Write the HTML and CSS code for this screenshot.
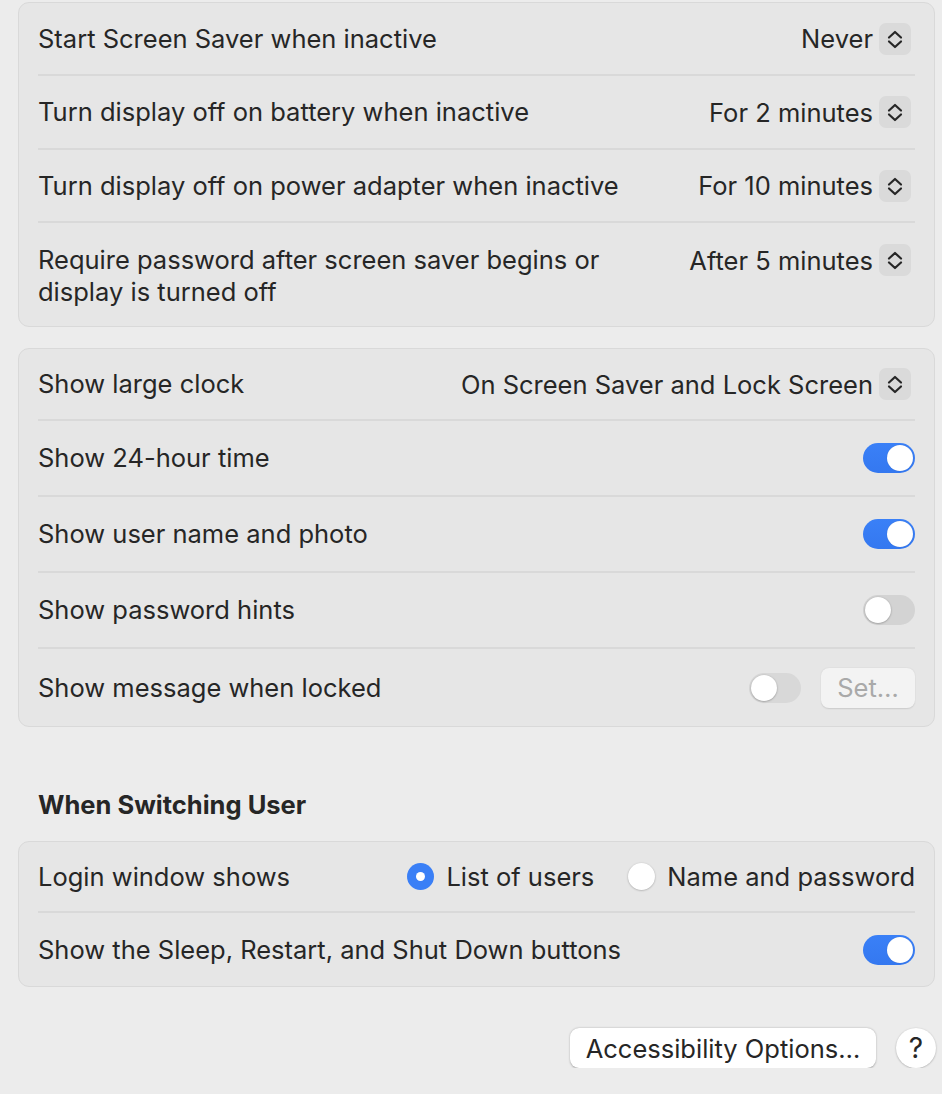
FILE: index.html
```html
<!DOCTYPE html>
<html>
<head>
<meta charset="utf-8">
<link rel="stylesheet" href="styles.css">
</head>
<body>
<div class="page">
  <div class="card">
    <div class="row h73">
      <span class="label">Start Screen Saver when inactive</span>
      <span class="popup"><span class="val">Never</span><span class="stepper"><svg viewBox="0 0 32 32" width="32" height="32"><path d="M10 14.5 L16 9 L22 14.5 M10 18.5 L16 24 L22 18.5" fill="none" stroke="#262626" stroke-width="2.2" stroke-linecap="round" stroke-linejoin="round"/></svg></span></span>
    </div>
    <div class="row h74">
      <span class="label">Turn display off on battery when inactive</span>
      <span class="popup"><span class="val">For 2 minutes</span><span class="stepper"><svg viewBox="0 0 32 32" width="32" height="32"><path d="M10 14.5 L16 9 L22 14.5 M10 18.5 L16 24 L22 18.5" fill="none" stroke="#262626" stroke-width="2.2" stroke-linecap="round" stroke-linejoin="round"/></svg></span></span>
    </div>
    <div class="row h73">
      <span class="label">Turn display off on power adapter when inactive</span>
      <span class="popup"><span class="val">For 10 minutes</span><span class="stepper"><svg viewBox="0 0 32 32" width="32" height="32"><path d="M10 14.5 L16 9 L22 14.5 M10 18.5 L16 24 L22 18.5" fill="none" stroke="#262626" stroke-width="2.2" stroke-linecap="round" stroke-linejoin="round"/></svg></span></span>
    </div>
    <div class="row row-top">
      <span class="label label-wrap">Require password after screen saver begins or display is turned off</span>
      <span class="popup"><span class="val">After 5 minutes</span><span class="stepper"><svg viewBox="0 0 32 32" width="32" height="32"><path d="M10 14.5 L16 9 L22 14.5 M10 18.5 L16 24 L22 18.5" fill="none" stroke="#262626" stroke-width="2.2" stroke-linecap="round" stroke-linejoin="round"/></svg></span></span>
    </div>
  </div>

  <div class="card">
    <div class="row h72">
      <span class="label">Show large clock</span>
      <span class="popup"><span class="val">On Screen Saver and Lock Screen</span><span class="stepper"><svg viewBox="0 0 32 32" width="32" height="32"><path d="M10 14.5 L16 9 L22 14.5 M10 18.5 L16 24 L22 18.5" fill="none" stroke="#262626" stroke-width="2.2" stroke-linecap="round" stroke-linejoin="round"/></svg></span></span>
    </div>
    <div class="row h76">
      <span class="label">Show 24-hour time</span>
      <span class="toggle on"><span class="knob"></span></span>
    </div>
    <div class="row h76">
      <span class="label">Show user name and photo</span>
      <span class="toggle on"><span class="knob"></span></span>
    </div>
    <div class="row h76">
      <span class="label">Show password hints</span>
      <span class="toggle"><span class="knob"></span></span>
    </div>
    <div class="row h77">
      <span class="label">Show message when locked</span>
      <span class="controls">
        <span class="toggle off-light"><span class="knob"></span></span>
        <span class="btn-set">Set…</span>
      </span>
    </div>
  </div>

  <h2 class="section-title">When Switching User</h2>

  <div class="card">
    <div class="row h71">
      <span class="label">Login window shows</span>
      <span class="radios">
        <span class="radio-item"><span class="radio sel"></span>List of users</span>
        <span class="radio-item"><span class="radio"></span>Name and password</span>
      </span>
    </div>
    <div class="row h73">
      <span class="label">Show the Sleep, Restart, and Shut Down buttons</span>
      <span class="toggle on"><span class="knob"></span></span>
    </div>
  </div>

  <div class="footer">
    <span class="btn">Accessibility Options…</span>
    <span class="help">?</span>
  </div>
</div>
</body>
</html>
```

FILE: styles.css
```css
html, body {
  margin: 0;
  padding: 0;
  background: #ececec;
}
body {
  font-family: "Inter", "Noto Sans", sans-serif;
  font-size: 25.5px;
  color: #262626;
}
.page {
  width: 917px;
  padding: 2px 0 0 18px;
}
.card {
  background: #e6e6e6;
  border: 1px solid #d9d9d9;
  border-radius: 11px;
  padding: 0 19px;
  margin-bottom: 21px;
}
.row {
  display: flex;
  align-items: center;
  justify-content: space-between;
  border-bottom: 2px solid #d9d9d9;
  box-sizing: border-box;
}
.row:last-child { border-bottom: none; }
.h71 { height: 71px; }
.h72 { height: 72px; }
.h73 { height: 73px; }
.h74 { height: 74px; }
.h76 { height: 76px; }
.h77 { height: 77px; }
.row-top {
  height: 103px;
  align-items: flex-start;
  padding-top: 21px;
}
.label {
  line-height: 32px;
}
.label-wrap { width: 590px; }
.popup {
  display: flex;
  align-items: center;
  gap: 6px;
}
.stepper {
  width: 32px;
  height: 32px;
  border-radius: 7px;
  background: #dadada;
  display: flex;
  margin-right: 4px;
}
.toggle {
  position: relative;
  width: 52px;
  height: 30px;
  border-radius: 15px;
  background: #d3d3d3;
  box-sizing: border-box;
  display: inline-block;
}
.toggle.on {
  background: linear-gradient(#3a80f7, #3478f0);
}
.toggle .knob {
  position: absolute;
  top: 2px;
  left: 2px;
  width: 26px;
  height: 26px;
  border-radius: 50%;
  background: #fff;
  box-shadow: 0 0.5px 2px rgba(0,0,0,0.35);
}
.toggle.on .knob { left: 24px; box-shadow: 0 0 1px rgba(0,0,0,0.2); }
.toggle.off-light { background: #d8d8d8; }
.controls {
  display: flex;
  align-items: center;
  gap: 20px;
}
.btn-set {
  width: 94px;
  height: 40px;
  box-sizing: border-box;
  border-radius: 8px;
  background: #f3f3f3;
  color: #a9a9a9;
  display: flex;
  align-items: center;
  justify-content: center;
  box-shadow: 0 0.5px 1.5px rgba(0,0,0,0.12);
}
.section-title {
  font-size: 25.5px;
  font-weight: 700;
  margin: 0;
  padding: 41px 0 20px 20px;
  line-height: 32px;
}
.radios {
  display: flex;
  align-items: center;
  gap: 34px;
}
.radio-item {
  display: flex;
  align-items: center;
  gap: 12px;
}
.radio {
  width: 27px;
  height: 27px;
  box-sizing: border-box;
  border-radius: 50%;
  background: #fff;
  box-shadow: 0 0.5px 2px rgba(0,0,0,0.3);
  position: relative;
}
.radio.sel {
  background: #3a7ff6;
  box-shadow: none;
}
.radio.sel::after {
  content: "";
  position: absolute;
  left: 9px;
  top: 9px;
  width: 9px;
  height: 9px;
  border-radius: 50%;
  background: #fff;
}
.footer {
  display: flex;
  justify-content: flex-end;
  align-items: center;
  gap: 20px;
  padding-top: 20px;
}
.btn {
  width: 306px;
  height: 40px;
  box-sizing: border-box;
  border-radius: 9px;
  background: #fff;
  display: flex;
  align-items: center;
  justify-content: center;
  box-shadow: 0 0.5px 2px rgba(0,0,0,0.3);
}
.help {
  width: 40px;
  height: 40px;
  border-radius: 50%;
  background: #fff;
  display: flex;
  align-items: center;
  justify-content: center;
  box-shadow: 0 0.5px 2px rgba(0,0,0,0.3);
  font-size: 28px;
  margin-right: -1px;
}
```
